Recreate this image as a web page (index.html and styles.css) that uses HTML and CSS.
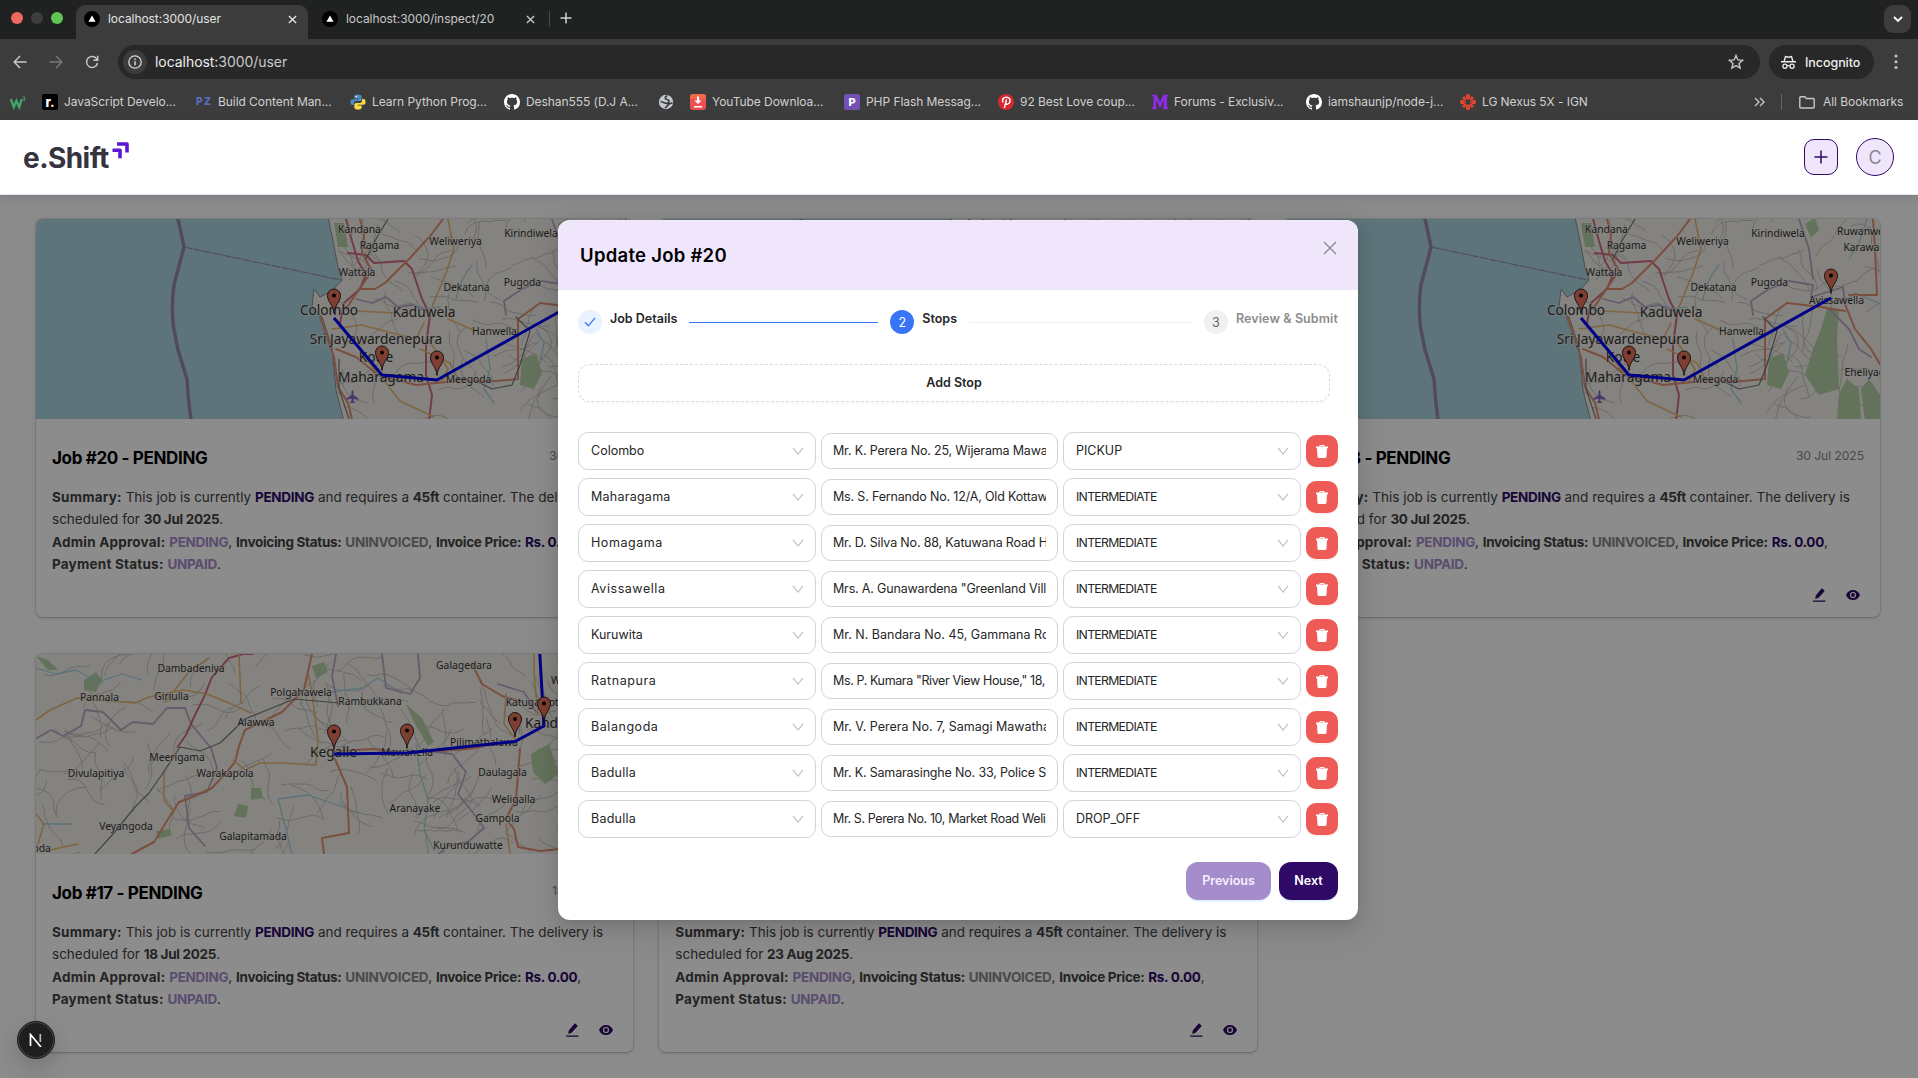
FILE: index.html
```html
<!DOCTYPE html>
<html lang="en">
<head>
<meta charset="utf-8">
<title>e.Shift</title>
<link rel="stylesheet" href="styles.css">
</head>
<body>
<svg class="defs" aria-hidden="true">
  <symbol id="i-pencil" viewBox="0 0 14 14"><path d="M1 12.6h12.4v1.2H1zM3.2 10.9l.6-3.5L9.2.9c.4-.4.9-.4 1.300-.1l1.700 1.400c.4.3.4.8.1 1.200L6.600 9.800z"/></symbol>
  <symbol id="i-eye" viewBox="0 0 14 10"><path fill-rule="evenodd" d="M7 0c3.300 0 5.900 2 7 5-1.100 3-3.700 5-7 5S1.100 8 0 5c1.100-3 3.700-5 7-5zm0 1.900a3.100 3.100 0 1 0 0 6.200 3.100 3.100 0 0 0 0-6.200zm0 1.200a1.900 1.900 0 1 1 0 3.800 1.900 1.900 0 0 1 0-3.800z"/></symbol>
  <symbol id="i-trash" viewBox="0 0 12 13"><path d="M3.200 1.600C3.200.7 3.800 0 4.600 0h2.800c.8 0 1.400.7 1.400 1.600H12v1.600h-1l-.5 8.600c0 .7-.6 1.200-1.200 1.200H2.700c-.6 0-1.200-.5-1.200-1.200L1 3.200H0V1.600zm1.100 0h3.400V1H4.300z"/></symbol>
  <symbol id="i-down" viewBox="0 0 12 8"><path d="M1 .8l5 6.200 5-6.200" fill="none" stroke="#bfbfbf" stroke-width="1.100"/></symbol>
  <symbol id="i-x" viewBox="0 0 10 10"><path d="M1 1l8 8M9 1L1 9" fill="none" stroke="currentColor" stroke-width="1.500"/></symbol>
  <symbol id="i-tri" viewBox="0 0 16 16"><circle cx="8" cy="8" r="8"/><path d="M8 4.400l3.600 6.400H4.400z" fill="#fff"/></symbol>
  <symbol id="i-github" viewBox="0 0 16 16"><path fill="#fff" d="M8 0C3.580 0 0 3.580 0 8c0 3.540 2.290 6.530 5.470 7.590.4.070.55-.17.55-.38 0-.19-.01-.82-.01-1.490-2.010.37-2.530-.49-2.690-.94-.09-.23-.48-.94-.82-1.130-.28-.15-.68-.52-.01-.53.63-.01 1.080.58 1.230.82.72 1.210 1.870.87 2.330.66.070-.52.28-.87.51-1.070-1.780-.2-3.640-.89-3.640-3.950 0-.87.31-1.590.82-2.150-.08-.2-.36-1.020.08-2.120 0 0 .67-.21 2.200.82.64-.18 1.320-.27 2-.27s1.360.09 2 .27c1.530-1.040 2.200-.82 2.200-.82.44 1.100.16 1.920.08 2.120.51.56.82 1.270.82 2.150 0 3.070-1.870 3.750-3.650 3.950.29.25.54.73.54 1.480 0 1.070-.01 1.930-.01 2.200 0 .21.15.46.55.38A8.010 8.010 0 0 0 16 8c0-4.420-3.580-8-8-8z"/></symbol>
</svg>

<div class="browser">
  <div class="tabstrip">
    <div class="lights"><i class="red"></i><i class="gray"></i><i class="green"></i></div>
    <div class="tab active"><svg class="fav"><use href="#i-tri"/></svg><span class="t1">localhost:3000/user</span><svg class="x"><use href="#i-x"/></svg></div>
    <div class="tab"><svg class="fav"><use href="#i-tri"/></svg><span class="t2">localhost:3000/inspect/20</span><svg class="x"><use href="#i-x"/></svg></div>
    <i class="tabsep"></i>
    <svg class="newtab" viewBox="0 0 12 12"><path d="M6 .5v11M.5 6h11" stroke="#d0d2d1" stroke-width="1.500"/></svg>
    <div class="tabmenu"><svg viewBox="0 0 10 7"><path d="M1 1l4 4 4-4" fill="none" stroke="#fff" stroke-width="1.800"/></svg></div>
  </div>
  <div class="toolbar">
    <svg class="nav" viewBox="0 0 14 14"><path d="M7 1L1.200 7 7 13M1.200 7H13.500" fill="none" stroke="#c7c7c7" stroke-width="1.500"/></svg>
    <svg class="nav" viewBox="0 0 14 14"><path d="M7 1l5.800 6L7 13M12.800 7H.5" fill="none" stroke="#777" stroke-width="1.500"/></svg>
    <svg class="nav" viewBox="0 0 14 14"><path d="M12 4.500A5.500 5.500 0 1 0 12.500 8M12.700.8v4.400H8.300" fill="none" stroke="#c7c7c7" stroke-width="1.500"/></svg>
    <div class="omnibox">
      <span class="info"><svg viewBox="0 0 14 14"><circle cx="7" cy="7" r="6.200" fill="none" stroke="#d8d8d8" stroke-width="1.300"/><path d="M7 6.200v4M7 3.600v1.500" stroke="#d8d8d8" stroke-width="1.500"/></svg></span>
      <span class="url"><b>localhost:</b>3000/user</span>
      <svg class="star" viewBox="0 0 16 16"><path d="M8 1.400l1.900 4.500 4.700.4-3.600 3.100 1.100 4.700L8 11.600l-4.100 2.500L5 9.400 1.400 6.300l4.700-.4z" fill="none" stroke="#c7c7c7" stroke-width="1.400"/></svg>
    </div>
    <div class="incog"><svg viewBox="0 0 16 16"><path d="M0 7.200h16M3.300 6.800L4.800 1.600l3.200.8 3.200-.8 1.500 5.200" fill="none" stroke="#eee" stroke-width="1.500"/><circle cx="4.200" cy="12" r="2.200" fill="none" stroke="#eee" stroke-width="1.400"/><circle cx="11.800" cy="12" r="2.200" fill="none" stroke="#eee" stroke-width="1.400"/><path d="M6.400 11.600q1.600-.8 3.200 0" fill="none" stroke="#eee" stroke-width="1.200"/></svg><span>Incognito</span></div>
    <svg class="dots" viewBox="0 0 4 16"><circle cx="2" cy="2" r="1.500"/><circle cx="2" cy="7.700" r="1.500"/><circle cx="2" cy="13.400" r="1.500"/></svg>
  </div>
  <div class="bookmarks">
    <a class="only"><svg class="bi" viewBox="0 0 16 16"><path d="M.8 5l3 8 2.600-6 2.800 6 2.600-8" fill="none" stroke="#3fa56f" stroke-width="2.400"/><path d="M12.800 3h2l-1 1.500q1.800.2 1 1.700-.8.900-2 .2" fill="none" stroke="#3fa56f"/></svg></a>
    <a><span class="bi roadmap">r.</span><span>JavaScript Develo...</span></a>
    <a><span class="bi pz">PZ</span><span>Build Content Man...</span></a>
    <a><svg class="bi" viewBox="0 0 16 16"><path d="M8 .4c-2.500 0-3.700.8-3.700 2.300v1.800h4v.7H2.500C1 5.200.4 6.500.4 8s.6 3 2.100 3H4V9.300c0-1.300 1-2.200 2.300-2.200h3.500c1.100 0 1.900-.8 1.900-1.900V2.700C11.700 1.200 10.300.4 8 .4z" fill="#4b8bbe"/><path d="M8 15.600c2.500 0 3.700-.8 3.700-2.300v-1.800h-4v-.7h5.800c1.500 0 2.100-1.300 2.100-2.800s-.6-3-2.100-3H12v1.700c0 1.300-1 2.200-2.300 2.200H6.200c-1.100 0-1.900.8-1.900 1.900v2.500c0 1.500 1.400 2.300 3.700 2.300z" fill="#ffd847"/><circle cx="6.200" cy="2.600" r=".8" fill="#fff"/></svg><span>Learn Python Prog...</span></a>
    <a><svg class="bi"><use href="#i-github"/></svg><span>Deshan555 (D.J A...</span></a>
    <a class="globe"><svg class="bi" viewBox="0 0 16 16"><circle cx="8" cy="8" r="7.200" fill="#c3c8ce"/><path d="M9.500 1.500C6 3 7 5 9 5.500s3 2 1 3.500-4-1-7.500-1.500M14.500 9q-3 0-4.500 2t-3 3" fill="none" stroke="#3c3c3c" stroke-width="1.700"/></svg></a>
    <a><svg class="bi" viewBox="0 0 16 16"><rect width="16" height="16" rx="3" fill="#ec4f54"/><path d="M0 5V3q0-3 3-3h10q3 0 3 3v2z" fill="#ee6a4a"/><path d="M7 2.500h2v4h2.600L8 10 4.400 6.500H7zM4 12h8v1.400H4z" fill="#fff"/></svg><span>YouTube Downloa...</span></a>
    <a><span class="bi php">P</span><span>PHP Flash Messag...</span></a>
    <a><svg class="bi" viewBox="0 0 16 16"><circle cx="8" cy="8" r="8" fill="#d8282f"/><path d="M5 8.500C3.500 5.500 5.500 3.300 8.300 3.300c3 0 4.400 2 3.600 4.500-.8 2.600-3.700 3.200-4.100 1.300M8.500 5.500L6.300 14" fill="none" stroke="#fff" stroke-width="1.500"/></svg><span>92 Best Love coup...</span></a>
    <a><svg class="bi" viewBox="0 0 16 16"><path d="M0 .8h4.600L8 8.200 11.400.8H16v1.600h-1.200l.4 11.200h.8v1.600h-5.200v-1.600h.9l-.2-7.400L8 14.400 4.300 6.200l-.4 7.400h1.200v1.600H0v-1.600h1.200L1.700 2.400H0z" fill="#8f2be8"/></svg><span>Forums - Exclusiv...</span></a>
    <a><svg class="bi"><use href="#i-github"/></svg><span>iamshaunjp/node-j...</span></a>
    <a><svg class="bi" viewBox="0 0 16 16"><g fill="#e0432f"><path d="M6 .6Q8-.6 10 .6V4L8 6 6 4zM6 15.400q2 1.200 4 0V12l-2-2-2 2zM.6 6Q-.6 8 .6 10H4l2-2-2-2zM15.400 6q1.200 2 0 4H12l-2-2 2-2z"/><path d="M2 4.600Q2.500 2.500 4.600 2L6.800 5.600 5.600 6.800zM14 4.600Q13.500 2.500 11.400 2L9.200 5.600l1.200 1.200zM2 11.400q.5 2.100 2.600 2.600l2.200-3.600-1.200-1.200zM14 11.400q-.5 2.100-2.600 2.600l-2.200-3.600 1.200-1.200z"/></g></svg><span>LG Nexus 5X - IGN</span></a>
    <svg class="more" viewBox="0 0 11 10"><path d="M1 1l4 4-4 4M6 1l4 4-4 4" fill="none" stroke="#c7c7c7" stroke-width="1.400"/></svg>
    <i class="bsep"></i>
    <svg class="folder" viewBox="0 0 16 13"><path d="M.8 11V1.800q0-1 1-1h4l1.600 1.700h6.800q1 0 1 1V11q0 1-1 1H1.800q-1 0-1-1z" fill="none" stroke="#c7c7c7" stroke-width="1.400"/></svg>
    <span class="all">All Bookmarks</span>
  </div>
</div>

<header class="appbar">
  <div class="logo"><span>e.Shift</span><svg viewBox="0 0 18 17"><path d="M1.500 8.300h7.500v8M6 2h10v8.500" fill="none" stroke="#5a18d6" stroke-width="3.600" stroke-linejoin="round"/></svg></div>
  <div class="appbar-actions">
    <button class="add"><svg viewBox="0 0 14 14"><path d="M7 .5v13M.5 7h13" stroke="#2e0a66" stroke-width="1.500"/></svg></button>
    <span class="avatar">C</span>
  </div>
</header>

<main class="page">
  <section class="grid">
    <article class="card"><div class="map" data-map="colombo"></div><div class="body">
      <div class="head"><h3>Job #20 - PENDING</h3><time>30 Jul 2025</time></div>
      <p><b class="w">Summary:</b> This job is currently <b class="p">PENDING</b> and requires a <b>45ft</b> container. The delivery is<br>scheduled for <b>30 Jul 2025</b>.</p>
      <p class="st"><b class="w">Admin Approval:</b> <b class="l">PENDING</b>, <b>Invoicing Status:</b> <b class="g">UNINVOICED</b>, <b>Invoice Price:</b> <b class="p">Rs. 0.00</b>,<br><b class="w">Payment Status:</b> <b class="l">UNPAID</b>.</p>
      <div class="acts"><svg class="pen"><use href="#i-pencil"/></svg><svg class="eye"><use href="#i-eye"/></svg></div></div></article>
    <article class="card"><div class="map" data-map="colombo"></div><div class="body">
      <div class="head"></div></div></article>
    <article class="card"><div class="map" data-map="colombo"></div><div class="body">
      <div class="head"><h3>Job #18 - PENDING</h3><time>30 Jul 2025</time></div>
      <p><b class="w">Summary:</b> This job is currently <b class="p">PENDING</b> and requires a <b>45ft</b> container. The delivery is<br>scheduled for <b>30 Jul 2025</b>.</p>
      <p class="st"><b class="w">Admin Approval:</b> <b class="l">PENDING</b>, <b>Invoicing Status:</b> <b class="g">UNINVOICED</b>, <b>Invoice Price:</b> <b class="p">Rs. 0.00</b>,<br><b class="w">Payment Status:</b> <b class="l">UNPAID</b>.</p>
      <div class="acts"><svg class="pen"><use href="#i-pencil"/></svg><svg class="eye"><use href="#i-eye"/></svg></div></div></article>
    <article class="card"><div class="map" data-map="kegalle"></div><div class="body">
      <div class="head"><h3>Job #17 - PENDING</h3><time>18 Jul 2025</time></div>
      <p><b class="w">Summary:</b> This job is currently <b class="p">PENDING</b> and requires a <b>45ft</b> container. The delivery is<br>scheduled for <b>18 Jul 2025</b>.</p>
      <p class="st"><b class="w">Admin Approval:</b> <b class="l">PENDING</b>, <b>Invoicing Status:</b> <b class="g">UNINVOICED</b>, <b>Invoice Price:</b> <b class="p">Rs. 0.00</b>,<br><b class="w">Payment Status:</b> <b class="l">UNPAID</b>.</p>
      <div class="acts"><svg class="pen"><use href="#i-pencil"/></svg><svg class="eye"><use href="#i-eye"/></svg></div></div></article>
    <article class="card"><div class="map"></div><div class="body">
      <div class="head"></div>
      <p><b class="w">Summary:</b> This job is currently <b class="p">PENDING</b> and requires a <b>45ft</b> container. The delivery is<br>scheduled for <b>23 Aug 2025</b>.</p>
      <p class="st"><b class="w">Admin Approval:</b> <b class="l">PENDING</b>, <b>Invoicing Status:</b> <b class="g">UNINVOICED</b>, <b>Invoice Price:</b> <b class="p">Rs. 0.00</b>,<br><b class="w">Payment Status:</b> <b class="l">UNPAID</b>.</p>
      <div class="acts"><svg class="pen"><use href="#i-pencil"/></svg><svg class="eye"><use href="#i-eye"/></svg></div></div></article>
  </section>

  <div class="mask">
    <div class="modal">
      <div class="modal-head"><h2>Update Job #20</h2><svg class="close" viewBox="0 0 14 14"><path d="M1 1l12 12M13 1L1 13" stroke="currentColor" stroke-width="1.300"/></svg></div>
      <div class="modal-body">
        <div class="steps">
          <span class="dot done"><svg viewBox="0 0 12 10"><path d="M1 5.300l3.400 3.500L11 .8" fill="none" stroke="#3875f6" stroke-width="1.300"/></svg></span><span class="lbl">Job Details</span><i class="rail on"></i>
          <span class="dot cur">2</span><span class="lbl s2">Stops</span><i class="rail"></i>
          <span class="dot">3</span><span class="lbl wait">Review &amp; Submit</span>
        </div>
        <button class="addstop">Add Stop</button>
        <div class="stops">
          <div class="row"><div class="sel"><span>Colombo</span><svg><use href="#i-down"/></svg></div><div class="inp snug"><span>Mr. K. Perera No. 25, Wijerama Mawatha</span></div><div class="sel"><span>PICKUP</span><svg><use href="#i-down"/></svg></div><button class="del"><svg><use href="#i-trash"/></svg></button></div>
          <div class="row"><div class="sel airy"><span>Maharagama</span><svg><use href="#i-down"/></svg></div><div class="inp snug"><span>Ms. S. Fernando No. 12/A, Old Kottawa</span></div><div class="sel mid"><span>INTERMEDIATE</span><svg><use href="#i-down"/></svg></div><button class="del"><svg><use href="#i-trash"/></svg></button></div>
          <div class="row"><div class="sel wide"><span>Homagama</span><svg><use href="#i-down"/></svg></div><div class="inp snug"><span>Mr. D. Silva No. 88, Katuwana Road Homagama</span></div><div class="sel mid"><span>INTERMEDIATE</span><svg><use href="#i-down"/></svg></div><button class="del"><svg><use href="#i-trash"/></svg></button></div>
          <div class="row"><div class="sel wide"><span>Avissawella</span><svg><use href="#i-down"/></svg></div><div class="inp snug"><span>Mrs. A. Gunawardena "Greenland Villa"</span></div><div class="sel mid"><span>INTERMEDIATE</span><svg><use href="#i-down"/></svg></div><button class="del"><svg><use href="#i-trash"/></svg></button></div>
          <div class="row"><div class="sel"><span>Kuruwita</span><svg><use href="#i-down"/></svg></div><div class="inp"><span>Mr. N. Bandara No. 45, Gammana Road</span></div><div class="sel mid"><span>INTERMEDIATE</span><svg><use href="#i-down"/></svg></div><button class="del"><svg><use href="#i-trash"/></svg></button></div>
          <div class="row"><div class="sel wide"><span>Ratnapura</span><svg><use href="#i-down"/></svg></div><div class="inp tight"><span>Ms. P. Kumara "River View House," 18,</span></div><div class="sel mid"><span>INTERMEDIATE</span><svg><use href="#i-down"/></svg></div><button class="del"><svg><use href="#i-trash"/></svg></button></div>
          <div class="row"><div class="sel wide"><span>Balangoda</span><svg><use href="#i-down"/></svg></div><div class="inp"><span>Mr. V. Perera No. 7, Samagi Mawatha</span></div><div class="sel mid"><span>INTERMEDIATE</span><svg><use href="#i-down"/></svg></div><button class="del"><svg><use href="#i-trash"/></svg></button></div>
          <div class="row"><div class="sel airy"><span>Badulla</span><svg><use href="#i-down"/></svg></div><div class="inp snug"><span>Mr. K. Samarasinghe No. 33, Police Station</span></div><div class="sel mid"><span>INTERMEDIATE</span><svg><use href="#i-down"/></svg></div><button class="del"><svg><use href="#i-trash"/></svg></button></div>
          <div class="row"><div class="sel airy"><span>Badulla</span><svg><use href="#i-down"/></svg></div><div class="inp tight"><span>Mr. S. Perera No. 10, Market Road Welimada</span></div><div class="sel"><span>DROP_OFF</span><svg><use href="#i-down"/></svg></div><button class="del"><svg><use href="#i-trash"/></svg></button></div>
        </div>
        <div class="foot"><button class="prev">Previous</button><button class="next">Next</button></div>
      </div>
    </div>
  </div>
  <div class="devbadge"><svg viewBox="0 0 14 14"><path d="M1.500 13V1.500L12 14" fill="none" stroke="#fff" stroke-width="1.700"/><path d="M11.300 1v8" stroke="#bbb" stroke-width="1.700"/></svg></div>
</main>
<script src="maps.js"></script>
</body>
</html>
```

FILE: styles.css
```css
* { box-sizing: border-box; }
body { margin: 0; width: 1918px; height: 1078px; overflow: hidden; display: flex; flex-direction: column; font-family: Inter, "Liberation Sans", sans-serif; background: #fff; }
button { font: inherit; padding: 0; border: 0; }
svg { display: block; flex: none; }
.defs { position: absolute; width: 0; height: 0; }

/* browser frame */
.browser { height: 120px; flex: none; background: #3c3c3c; color: #d0d0d0; font-size: 12px; letter-spacing: -.06px; }
.tabstrip { height: 39px; background: #202221; display: flex; align-items: flex-start; }
.lights { display: flex; gap: 8px; padding: 12px 13px 0 11px; width: 76px; }
.lights i { width: 12px; height: 12px; border-radius: 50%; }
.red { background: #ed6a5e; } .gray { background: #3d3f3e; } .green { background: #61c554; }
.tab { width: 238px; height: 34px; margin-top: 5px; padding: 0 11px 6px 14px; display: flex; align-items: center; color: #c6c8c7; }
.tab.active { width: 232px; padding: 0 11px 6px 8px; background: #3c3c3c; border-radius: 9px 9px 0 0; color: #e3e3e3; }
.tab .fav { width: 16px; height: 16px; margin-right: 8px; }
.tab span { flex: 1; white-space: nowrap; padding-bottom: 1px; }
.tab .x { width: 9px; height: 9px; }
.tabsep { width: 1px; height: 16px; background: #4a4c4b; margin: 11px 10px 0 3px; }
.newtab { width: 12px; height: 12px; margin-top: 12px; }
.tabmenu { width: 27px; height: 28px; margin: 5px 7px 0 auto; border-radius: 9px; background: #3c3c3c; display: grid; place-items: center; }
.tabmenu svg { width: 10px; height: 7px; }
.toolbar { height: 46px; display: flex; align-items: center; padding: 0 18px 0 13px; }
.nav { width: 14px; height: 14px; margin-right: 22px; }
.omnibox { width: 1642px; height: 34px; margin-left: -3px; border-radius: 17px; background: #282828; display: flex; align-items: center; padding: 0 16px 0 5px; }
.info { width: 24px; height: 24px; border-radius: 50%; background: #3c3c3c; display: grid; place-items: center; }
.info svg { width: 14px; height: 14px; }
.url { flex: 1; margin-left: 8px; padding-bottom: 1px; font-size: 14px; letter-spacing: -.05px; color: #c9c9c9; }
.url b { font-weight: 400; color: #eee; }
.star { width: 16px; height: 16px; }
.incog { width: 105px; height: 34px; margin-left: 9px; border-radius: 17px; background: #282828; color: #eee; display: flex; align-items: center; padding-left: 12px; font-size: 12.500px; font-weight: 500; }
.incog svg { width: 15px; height: 15px; margin-right: 9px; }
.dots { width: 4px; height: 16px; margin-left: 20px; fill: #c7c7c7; }
.bookmarks { height: 34px; display: flex; align-items: center; padding-left: 10px; white-space: nowrap; }
.bookmarks a { width: 154px; display: flex; align-items: center; gap: 6px; flex: none; }
.bookmarks a.only, .bookmarks a.globe { width: 32px; }
.bookmarks a span:last-child, .all { position: relative; top: -1px; }
.bi { width: 16px; height: 16px; flex: none; text-align: center; line-height: 16px; font-weight: 800; overflow: hidden; }
.roadmap { background: #000; color: #fff; border-radius: 2px; font-size: 13px; }
.pz { color: #5a6fc0; font-size: 10px; line-height: 14px; letter-spacing: 1.500px; }
.php { background: #7452b5; color: #fff; border-radius: 2px; font-size: 11px; }
.more { width: 11px; height: 10px; margin-left: 140px; }
.bsep { width: 1px; height: 16px; background: #646464; margin: 0 17px 0 16px; }
.folder { width: 16px; height: 13px; margin-right: 8px; }

/* application header */
.appbar { height: 75px; flex: none; background: #fff; border-bottom: 1px solid #e6e6ea; position: relative; z-index: 2; display: flex; justify-content: space-between; align-items: center; padding: 0 24px 0 23px; box-shadow: 0 2px 9px rgba(40, 20, 110, .13); }
.logo { display: flex; color: #35343e; padding-top: 2px; }
.logo span { font-size: 28px; font-weight: 700; letter-spacing: -.55px; line-height: 34px; }
.logo svg { width: 18px; height: 17px; margin: 1px 0 0 2px; }
.appbar-actions { display: flex; align-items: center; gap: 18px; }
.add { width: 34px; height: 36px; border: 1px solid #2e0a66; border-radius: 10px; background: #efe6fc; display: grid; place-items: center; }
.add svg { width: 14px; height: 14px; }
.avatar { width: 38px; height: 38px; border: 1px solid #2e0a66; border-radius: 50%; background: #efe6fc; color: #8a8690; font-size: 18px; display: grid; place-items: center; }

/* job cards */
.page { flex: 1; position: relative; overflow: hidden; background: #fdfdfd; }
.grid { display: grid; grid-template-columns: repeat(3, 599.33px); gap: 35px 24px; padding: 23px 0 0 35px; }
.card { height: 400px; border: 1px solid #dcdcdc; border-bottom-color: #c8c8c8; border-radius: 8px; background: #fff; overflow: hidden; box-shadow: 0 1px 3px rgba(0, 0, 0, .1); }
.map { height: 200px; background: #f2efe9; overflow: hidden; }
.map svg { width: 598px; height: 201px; }
.body { padding: 27px 16px 0; color: #424242; font-size: 13.500px; line-height: 22.300px; white-space: nowrap; }
.head { display: flex; justify-content: space-between; height: 40px; }
h3 { margin: 0; font-size: 17px; line-height: 24px; font-weight: 700; letter-spacing: -.35px; color: #000; }
time { font-size: 12.200px; line-height: 20px; color: #888; letter-spacing: -.1px; }
p { margin: 0; }
p b { font-weight: 700; letter-spacing: -.3px; }
p b.w { letter-spacing: .22px; }
.p { color: #2e0a66; } .l { color: #a58ccb; } .g { color: #888; }
.acts { display: flex; justify-content: flex-end; align-items: center; gap: 20px; margin: 13px 4px 0 0; fill: #2e0a66; }
.pen { width: 14px; height: 14px; } .eye { width: 14px; height: 10px; }

/* modal */
.mask { position: absolute; inset: 0; background: rgba(0, 0, 0, .45); display: flex; justify-content: center; align-items: flex-start; padding: 25px 2px 0 0; }
.modal { width: 800px; height: 700px; border-radius: 12px; background: #fff; overflow: hidden; box-shadow: 0 6px 16px rgba(0, 0, 0, .08), 0 3px 6px -4px rgba(0, 0, 0, .12), 0 9px 28px 8px rgba(0, 0, 0, .07); }
.modal-head { height: 70px; background: #efe6fc; display: flex; justify-content: space-between; padding: 21px 21px 0 22px; color: #8a8590; }
h2 { margin: 0; font-size: 18.500px; line-height: 28px; font-weight: 600; letter-spacing: .27px; color: #000; }
.close { width: 14px; height: 14px; }
.modal-body { padding: 20px 20px 0; color: #262626; font-size: 12.500px; }
.steps { display: flex; height: 24px; }
.dot { width: 24px; height: 24px; border-radius: 50%; background: #f0f0f0; color: #666; display: grid; place-items: center; flex: none; }
.dot.done { background: #e8f3ff; } .dot.done svg { width: 12px; height: 10px; }
.dot.cur { background: #3875f6; color: #fff; }
.lbl { margin-left: 8px; font-weight: 600; line-height: 17px; white-space: nowrap; flex: none; }
.wait { color: #8c8c8c; letter-spacing: .1px; }
.rail { height: 1px; flex: 1; margin: 12px 12px 0; background: #f0f0f0; }
.rail.on { flex: none; width: 189px; background: #3875f6; }
.addstop { display: block; width: 752px; height: 38px; margin-top: 30px; padding-bottom: 1px; border: 1px dashed #d9d9d9; border-radius: 12px; background: #fff; font-weight: 600; color: #262626; box-shadow: 0 2px 0 rgba(0, 0, 0, .02); }
.stops { display: grid; gap: 8px; margin-top: 30px; }
.row { display: grid; grid-template-columns: 238px 237px 238px 32px; gap: 5px; height: 38px; align-items: center; }
.sel { height: 38px; border: 1px solid #d4d4d4; border-radius: 10px; display: flex; align-items: center; justify-content: space-between; padding: 0 11px 1px 12px; }
.sel svg { width: 12px; height: 8px; }
.sel.airy { letter-spacing: .25px; }
.sel.wide { letter-spacing: .55px; }
.sel.mid span { font-size: 12.300px; letter-spacing: -.72px; }
.inp { height: 36px; border: 1px solid #d4d4d4; border-radius: 10px; padding: 0 11px 1px; display: flex; align-items: center; }
.inp span { overflow: hidden; white-space: nowrap; width: 213px; }
.inp.snug { letter-spacing: -.17px; }
.inp.tight { letter-spacing: -.38px; }
.del { width: 32px; height: 32px; border-radius: 10px; background: #ee5b56; display: grid; place-items: center; fill: #fff; box-shadow: 0 2px 0 rgba(255, 38, 5, .06); }
.del svg { width: 12px; height: 13px; }
.foot { display: flex; justify-content: flex-end; gap: 8px; margin-top: 24px; font-weight: 600; }
.foot button { height: 38px; padding-bottom: 1px; border-radius: 12px; color: #fff; box-shadow: 0 2px 0 rgba(5, 145, 255, .1); }
.foot .prev { width: 85px; background: #a58ccb; color: #f6effe; }
.foot .next { width: 59px; background: #2e0a66; }

.devbadge { position: absolute; left: 17px; bottom: 19px; width: 38px; height: 38px; border-radius: 50%; background: #1e1e1e; border: 1px solid #171717; box-shadow: inset 0 0 0 1px #4a4a4a, 0 8px 20px rgba(0, 0, 0, .16); display: grid; place-items: center; }
.devbadge svg { width: 14px; height: 14px; }

/* map layers */
.map path { fill: none; stroke-linejoin: round; stroke-linecap: round; }
.map .sea { fill: #aad3df; stroke: #8b8b8b; }
.map .minor { stroke: #c6c3bf; stroke-width: 1; }
.map .water { stroke: #a5cfdf; stroke-width: 1.300; }
.map .edge { stroke: #bba6c4; stroke-width: 1.800; }
.map .seaedge { stroke: #9488a6; stroke-width: 3.500; }
.map .seadash { stroke: #9488a6; stroke-width: 1.100; stroke-dasharray: 8 2; }
.map .trunk { stroke: #e08e72; stroke-width: 2; }
.map .motor { stroke: #cf6c84; stroke-width: 2; }
.map .prim { stroke: #e6b873; stroke-width: 1.600; }
.map .rail-line { stroke: #777; stroke-width: 1.200; }
.map .wood { fill: #b5cfa5; }
.map .route { stroke: #0000f5; stroke-width: 3; stroke-linejoin: miter; stroke-linecap: butt; }
.map text { font-family: "Noto Sans", sans-serif; font-size: 10.300px; fill: #333; stroke: #f2efe9; stroke-width: 1.500px; stroke-opacity: .7; paint-order: stroke; }
.map text.big { font-size: 13.700px; }
.map .pin { fill: #e6715c; stroke: #30201c; stroke-width: 1; }
```

FILE: maps.js
```js
// Static route previews: layers of roads, labels, the route and its pins.
const MAPS = {
  colombo: {
    seed: 7, from: 300,
    layers: [
      ['sea', 'M-2 -2H292L297 22 303 53 306 61 296 72 284 78 278 70 276 88 286 98 296 128 300 171 308 203H-2z'],
      ['wood', 'M298 4h10l4 24h-10zM486 140l14 -6 6 20 -8 16 -14 -4zM530 130l8 -20 6 -20 12 0 -2 30 2 50 -20 6 -14 -20zM556 175l8 -15 12 10 2 30h-24zM578 170l8 -10 14 20v22h-18zM522 5l10 -6 4 12 -8 8z'],
      ['water', 'M360 88l14 -4 16 6 14 -2M420 80q4 -20 16 -34M450 120l4 30 -6 20 10 14M500 110l8 14 -4 20M566 40l10 -16 8 -24M562 82l10 -8 28 12'],
      ['edge', 'M320 80l16 4 14 -6 12 10 14 -2 14 6M470 96l-2 -14 18 -12 20 -8 24 4 -2 12 20 -6 12 -4 2 16M516 0l10 30 4 30M546 90l20 20 10 20 12 8'],
      ['motor', 'M310 0l6 22 6 20 8 14 -6 14 -16 14 -4 20M312 34l18 2 8 8 30 -2 8 8 10 30 8 16 -4 30 0 30 6 20 -4 35'],
      ['trunk', 'M407 0l-12 16 -20 22 -26 26 -10 6 -16 0M324 0l4 16 -2 18 10 18 -14 20 -12 18M284 98l14 40 4 30 10 16 4 16M300 130l20 8 22 18 38 10 40 -4 40 0 22 -2 0 -60 22 -16 34 4 24 4M590 0l2 30 2 46 -28 0M560 80l12 30 16 20 12 20'],
      ['prim', 'M412 0l6 30 -8 24 -14 34M320 92l40 2M296 110l30 -4 30 8 24 6 8 -16M330 140l20 24 14 18 34 16M392 120l20 30 -6 12M412 100l32 14M384 130l30 14 10 20'],
      ['rail-line', 'M352 0l-12 20 -10 20M303 140v30l10 30M440 162l16 8 20 -4 8 -20 10 -34 -14 -14']
    ],
    seaLines: [['seaedge', 'M142 0L148 28 138 66Q135 86 137.500 108L142 131 151 160 152.500 180 155 201'], ['seadash', 'M148 28L305 61']],
    route: [[298, 99], [346, 156], [401, 161], [548, 79]],
    labels: [['Kandana', 323.5, 14], ['Ragama', 343.5, 30], ['Weliweriya', 419.5, 26], ['Kirindiwela', 495, 17.5], ['Wattala', 321, 56.5], ['Dekatana', 430.5, 72], ['Pugoda', 486.5, 67], ['Hanwella', 458.5, 116], ['Meegoda', 432.5, 164], ['Ruwanwella', 583, 16], ['Karawanella', 590, 32], ['Avissawella', 553.5, 84.5], ['Eheliyagoda', 591, 157], ['Colombo', 293, 96, 1], ['Kaduwela', 388, 98, 1], ['Sri Jayawardenepura', 340, 125, 1], ['Kotte', 340, 143, 1], ['Maharagama', 345, 163, 1]],
    plane: [316.5, 178]
  },
  kegalle: {
    seed: 23, from: 0,
    layers: [
      ['wood', 'M48 26l12 -8 6 8 -6 12 -12 -2zM215 134h10l2 10 -12 2zM202 150l10 2 -2 12 -12 -2zM120 177l14 -2 2 6 -14 4zM370 50l16 14 12 24 -6 4 -14 -24zM495 100l18 -10 10 30 -14 10 -12 -12zM0 2l12 4 10 10 -10 0zM276 12l12 -4 4 10 -12 6z'],
      ['water', 'M0 14l20 6 20 -4 22 12 24 -8 20 6M296 38l30 -4 16 -10 24 16M242 145l30 -4 30 10 20 8M242 145l8 30 6 26M380 90l4 30 8 26 -4 30 10 20M6 170l30 0M480 60l4 20'],
      ['edge', 'M1 84l14 -8 12 6 18 -10 4 -16 18 2 18 18 12 -8 20 2 14 -16 18 0 6 16 20 24 6 20 -10 24 -22 4 4 32 16 18 M300 0l-4 22 6 30M346 0l4 34 24 6 10 -16 -2 -24M386 96l30 4 14 18 -8 22 16 20 10 14 -16 14 -20 4 -14 12M462 30l26 8 12 20'],
      ['motor', 'M217 0h-10l-14 4 -17 19 -8 20 -10 20 -8 18 -8.500 12'],
      ['trunk', 'M276 0l-5 22 -3 14 -22 22 -37 18 -6 16 -4 16 -10 12 -13 14 -17 8 -16 6 -9 14 -16 26 -15 8 -18 10M299 105l12 28 2 46 -27 5 2 16M298 97l40 -2 34 4 60 -4 48 -8M436 10l10 20 20 12 20 6M484 95l-4 50 -10 20 8 10 4 18 22 4 20 -2'],
      ['prim', 'M0 66l14 -10 27 -12 58 5 14 -6 34 -7 24 4 22 9 22 10M203 0l2 49M129 48l24 -30 20 -14M272 19l4 20 6 47 -2 25 -34 -2 -22 0 -15 7 -12 -10M128 118l0 28 10 12M470 40l-2 30 12 16M470 170l4 30M0 160l8 10 -6 20M498 0v20l4 40M14 196l28 -6'],
      ['rail-line', 'M58 201l20 -22 21 -26 14 -14 14 -20 17 -26 20 4 20 -8 25 -24 49 -20 45 4']
    ],
    seaLines: [],
    route: [[298, 100], [371, 99], [479, 87.5], [508, 72], [503.500, -5]],
    noPinLast: true,
    labels: [['Dambadeniya', 155, 18], ['Pannala', 63.5, 46.5], ['Giriulla', 135.500, 46], ['Polgahawela', 265, 42], ['Rambukkana', 334, 50.5], ['Galagedara', 428, 14.5], ['Alawwa', 220, 72], ['Mawanella', 371, 102], ['Pilimathalawa', 448, 92], ['Katugastota', 499, 51.5], ['Meerigama', 141, 106.5], ['Warakapola', 189, 123], ['Divulapitiya', 60, 123], ['Daulagala', 466.500, 122], ['Weligalla', 477.500, 149], ['Aranayake', 379, 158], ['Gampola', 461.500, 168], ['Veyangoda', 90, 175.500], ['Galapitamada', 217, 185.500], ['Kurunduwatte', 432, 194.500], ['Minuwangoda', -20, 197.5], ['Wattegama', 543, 30], ['Kegalle', 297.500, 103, 1], ['Kandy', 509, 74, 1]]
  }
};

function minorRoads(seed, from) {
  let s = seed, d = '';
  const rnd = () => (s = (s * 16807) % 2147483647) / 2147483647;
  for (let i = 0; i < 120; i++) rnd();
  const count = Math.round((600 - from) * .27);
  for (let i = 0; i < count; i++) {
    let x = from + rnd() * (600 - from), y = rnd() * 200, a = rnd() * 6.28;
    d += `M${x.toFixed(1)} ${y.toFixed(1)}`;
    for (let k = 0; k < 8; k++) {
      a += (rnd() - .5) * .9;
      x += Math.cos(a) * 6; y += Math.sin(a) * 6;
      if (x < from) break;
      d += `L${x.toFixed(1)} ${y.toFixed(1)}`;
    }
  }
  return d;
}

document.querySelectorAll('[data-map]').forEach(el => {
  const m = MAPS[el.dataset.map];
  const path = ([c, d]) => `<path class="${c}" d="${d}"/>`;
  const pins = (m.noPinLast ? m.route.slice(0, -1) : m.route).map(([x, y]) =>
    `<g transform="translate(${x} ${y - 5})"><path class="pin" d="M0 0C-.5 -8 -6.500 -11 -6.500 -17.500A6.500 6.500 0 0 1 6.500 -17.500C6.500 -11 .5 -8 0 0z"/><circle cy="-17.500" r="2" fill="#000"/></g>`).join('');
  const plane = m.plane ? `<path transform="translate(${m.plane})" style="fill:#8461c4" d="M-1 -5.500L0 -7 1 -5.500V-2L6 1.500V3L1 1.500V4L3 6H-3L-1 4V1.500L-6 3V1.500L-1 -2z"/>` : '';
  el.innerHTML = `<svg viewBox="0 0 598 201">` + path(['minor', minorRoads(m.seed, m.from)]) +
    m.layers.map(path).join('') + m.seaLines.map(path).join('') + plane +
    m.labels.map(([t, x, y, big]) => `<text x="${x}" y="${y}" text-anchor="middle"${big ? ' class="big"' : ''}>${t}</text>`).join('') +
    path(['route', 'M' + m.route.map(p => p.join(' ')).join('L')]) + pins + '</svg>';
});
```
